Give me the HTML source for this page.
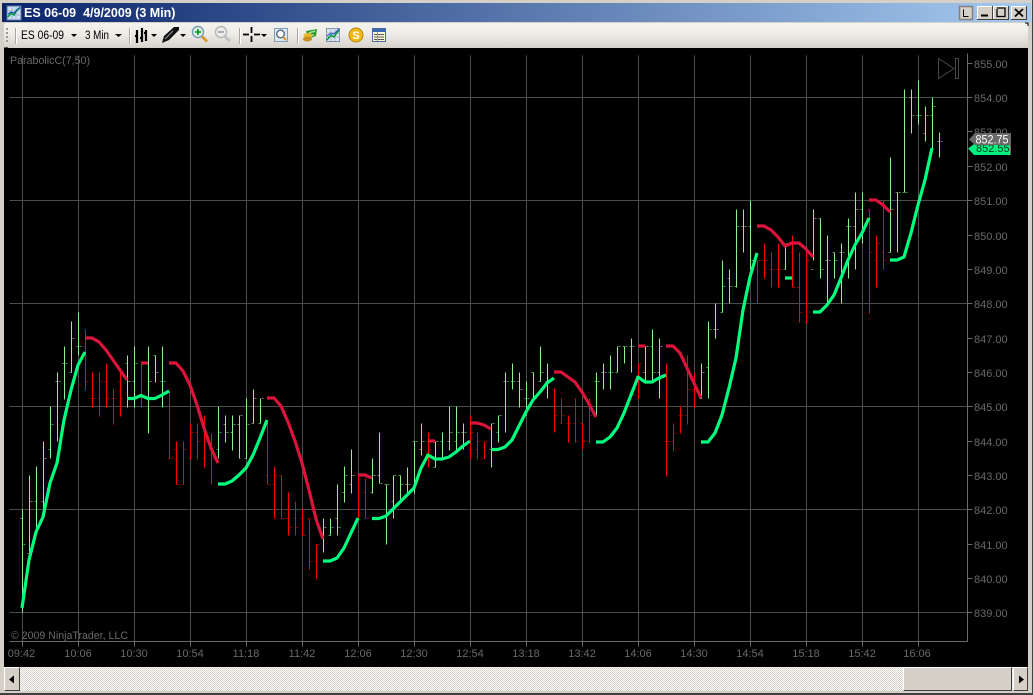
<!DOCTYPE html>
<html><head><meta charset="utf-8"><title>ES 06-09</title>
<style>
html,body{margin:0;padding:0;background:#d4d0c8;overflow:hidden}
body{width:1033px;height:695px;position:relative;font-family:"Liberation Sans",sans-serif}
svg{position:absolute;left:0;top:0}
text{font-family:"Liberation Sans",sans-serif}
#title{position:absolute;left:2px;top:3px;width:1029px;height:19px;background:linear-gradient(90deg,#0a246a 0,#a6caf0 100%)}
#tbar{position:absolute;left:4px;top:23px;width:1024px;height:24px;background:linear-gradient(180deg,#f4f3ee 0,#eeece6 45%,#d6d3cc 100%);border-radius:2px}
#chart{position:absolute;left:4px;top:48px;width:1024px;height:619px;background:#000}
#scroll{position:absolute;left:4px;top:667px;width:1024px;height:24px;background:repeating-conic-gradient(#d4d0c8 0 25%,#fff 0 50%) 0 0/2px 2px}
.b{position:absolute;box-sizing:border-box;background:#d4d0c8;border:1px solid;border-color:#fff #404040 #404040 #fff}
</style></head><body>
<div style="position:absolute;left:0;top:693px;width:1033px;height:2px;background:#404040"></div>
<div style="position:absolute;left:1032px;top:0;width:1px;height:695px;background:#404040"></div>
<div id="title"></div>
<div id="tbar"></div>
<div id="chart"></div>
<div id="scroll">
<div class="b" style="left:0;top:0;width:16px;height:24px"></div>
<div class="b" style="left:899px;top:0;width:109px;height:24px"></div>
<div class="b" style="left:1009px;top:0;width:15px;height:24px"></div>
</div>
<svg width="1033" height="695" viewBox="0 0 1033 695">
<!-- title bar -->
<text x="24" y="17" font-size="12.5" font-weight="bold" fill="#fff" xml:space="preserve">ES 06-09  4/9/2009 (3 Min)</text>
<rect x="7" y="6" width="14" height="14" fill="#cfe0f4" stroke="#54719c"/>
<path d="M7 11h14M7 15h14M12 6v14M16 6v14" stroke="#9db4d0" stroke-width="1"/>
<path d="M8 17l3-4 3 2 3-5 3-2" fill="none" stroke="#00a040" stroke-width="1.6"/>
<path d="M8 14l3-2 3 1 3-3 3-3" fill="none" stroke="#2040c0" stroke-width="1"/>
<rect x="959.500" y="6.500" width="13" height="13" fill="#d4d0c8" stroke="#808080" stroke-width="1.500"/>
<path d="M963.500 9.500v7h5" fill="none" stroke="#000" stroke-width="1"/>
<g fill="#d4d0c8" stroke="#404040"><rect x="977.500" y="6.500" width="15" height="13"/><rect x="993.500" y="6.500" width="15" height="13"/><rect x="1011.500" y="6.500" width="15" height="13"/></g>
<path d="M977.500 19V6.500H992M993.500 19V6.500H1008M1011.500 19V6.500H1026" fill="none" stroke="#fff"/>
<path d="M981 15.500h7" stroke="#000" stroke-width="2"/>
<path d="M997 8h8v1.500M997 9v7.500h8V9" fill="none" stroke="#000" stroke-width="1.300"/>
<path d="M1015 9l8 7.500M1023 9l-8 7.500" stroke="#000" stroke-width="1.800"/>
<!-- toolbar -->
<g fill="#9a9890"><rect x="6" y="28" width="2" height="2"/><rect x="6" y="32" width="2" height="2"/><rect x="6" y="36" width="2" height="2"/><rect x="6" y="40" width="2" height="2"/></g>
<path d="M15.500 28v16M129.500 28v16M239.500 28v16M297.500 28v16" stroke="#a8a69e"/>
<path d="M16.500 28v16M130.500 28v16M240.500 28v16M298.500 28v16" stroke="#fff"/>
<text x="21" y="39" font-size="11.500" fill="#000" textLength="43" lengthAdjust="spacingAndGlyphs">ES 06-09</text>
<text x="85" y="39" font-size="11.500" fill="#000" textLength="24" lengthAdjust="spacingAndGlyphs">3 Min</text>
<g fill="#000"><path d="M71 34h6l-3 3zM115 34h7l-3.500 3zM151 34h6l-3 3zM180 34h6l-3 3zM261 34h6l-3 3z"/></g>
<path d="M137 30v13M135 36h2M142 28v14M144 33h2M140 38h2M146 30v11" fill="none" stroke="#000" stroke-width="2.200"/>
<path d="M162 43l2-7 10-9 5 0 0 3-10 10z" fill="#111"/><path d="M165 39l8-8" stroke="#999"/>
<circle cx="198" cy="32" r="5.500" fill="#e2f0de" stroke="#7c9cbc" stroke-width="1.500"/>
<path d="M195 32h6M198 29v6" stroke="#10a030" stroke-width="1.800"/>
<path d="M202 36.500l5 5" stroke="#d89a30" stroke-width="3"/>
<circle cx="221" cy="32" r="5.500" fill="#ececec" stroke="#b8b8b8" stroke-width="1.500"/>
<path d="M218 32h6" stroke="#a8a8a8" stroke-width="1.800"/>
<path d="M225 36.500l5 5" stroke="#c0c0c0" stroke-width="3"/>
<path d="M243 34.500h6M254 34.500h6M251.500 27v6M251.500 36v6" stroke="#000" stroke-width="1.800"/>
<rect x="274.500" y="28.500" width="13" height="13" fill="#dfe9f6" stroke="#7f9db9"/>
<circle cx="280.500" cy="34" r="3.800" fill="#fff" stroke="#567" stroke-width="1.400"/><path d="M283 37l3 3" stroke="#d89a30" stroke-width="2.200"/>
<path d="M306 31l11-2-1 7-8 3z" fill="#2e9a2e"/><path d="M309 33l6-2M309 36l5-1" stroke="#9fe09f" stroke-width="1.500"/>
<ellipse cx="308" cy="35.500" rx="4.500" ry="2.500" fill="#e8b830"/><ellipse cx="307.500" cy="39" rx="4.500" ry="2.500" fill="#c89020"/>
<rect x="326.500" y="28.500" width="13" height="13" fill="#dbe6f4" stroke="#7f8fa9"/>
<path d="M326 33h14M326 37h14M331 28v13M335 28v13" stroke="#aab8cc"/>
<path d="M327 40l4-5 3 2 5-7" fill="none" stroke="#009a40" stroke-width="1.500"/><path d="M327 36l4-3 3 1 5-5" fill="none" stroke="#2050c0"/>
<circle cx="356" cy="35" r="7" fill="#f0b818" stroke="#b88410"/>
<text x="356" y="39" font-size="11" font-weight="bold" fill="#fff" text-anchor="middle">S</text>
<rect x="372.500" y="28.500" width="13" height="13" fill="#fbf7d8" stroke="#4a6c9c"/>
<rect x="373" y="29" width="12" height="3" fill="#3a68b0"/>
<path d="M374 34.500h10M374 37h10M374 39.500h10" stroke="#555" stroke-width="1"/>
<path d="M377.500 32v9" stroke="#999"/>
<path d="M4 48h3v-1M1025 23h3v3" stroke="#000" fill="none"/>
<!-- chart grid -->
<g shape-rendering="crispEdges" transform="translate(.5 .5)">
<path d="M9 97H967M9 200H967M9 303H967M9 406H967M9 509H967M9 612H967M22 55V641M78 55V641M134 55V641M190 55V641M246 55V641M302 55V641M358 55V641M414 55V641M470 55V641M526 55V641M582 55V641M638 55V641M694 55V641M750 55V641M806 55V641M862 55V641M918 55V641" stroke="#4c4c4c" fill="none"/>
<path d="M967 53V641H9M967 63h5M967 97h5M967 131h5M967 166h5M967 200h5M967 235h5M967 269h5M967 303h5M967 338h5M967 372h5M967 406h5M967 441h5M967 475h5M967 509h5M967 544h5M967 578h5M967 612h5M22 641v5M78 641v5M134 641v5M190 641v5M246 641v5M302 641v5M358 641v5M414 641v5M470 641v5M526 641v5M582 641v5M638 641v5M694 641v5M750 641v5M806 641v5M862 641v5M918 641v5" stroke="#6a6a6a" fill="none"/>
<!-- green bars -->
<path fill="none" stroke="#90ee90" d="M22 509V612M29 475V553M36 466V527M43 441V513M50 406V458M57 372V441M64 346V399M71 321V372M78 312V355M127 355V407M134 346V407M148 346V433M155 355V382M162 346V407M218 406V458M225 415V442M232 415V450M239 415V458M246 398V458M253 389V423M260 398V423M323 518V552M330 518V535M337 484V535M344 466V502M351 449V493M372 458V493M379 432V483M386 484V544M393 475V518M400 475V501M407 467V493M414 441V493M421 423V455M435 441V467M442 432V458M449 406V450M456 406V450M463 423V449M491 423V467M498 415V442M505 372V432M512 363V389M519 372V407M526 381V415M533 372V398M540 346V381M547 363V398M596 372V415M603 363V389M610 355V389M617 346V372M624 346V363M631 338V372M645 346V381M652 329V381M659 338V398M701 363V398M708 321V398M715 303V338M722 260V312M729 269V303M736 209V287M743 209V252M750 200V269M785 243V269M813 209V260M820 218V278M827 235V303M834 252V278M841 243V303M848 218V278M855 192V269M862 192V243M890 157V252M897 192V252M904 89V192M911 89V133M918 80V124M925 106V141M932 97V150M939 132V157"/>
<path fill="none" stroke="#90ee90" stroke-opacity=".6" d="M20 518h2M23 544h2M27 553h2M30 501h2M34 501h2M37 527h2M41 501h2M44 458h2M48 449h2M51 424h2M55 381h2M58 381h2M62 363h2M65 363h2M69 372h2M72 338h2M76 346h2M79 346h2M125 363h2M128 381h2M132 381h2M135 363h2M146 363h2M149 381h2M153 355h2M156 372h2M160 381h2M163 381h2M216 449h2M219 432h2M223 424h2M226 432h2M230 432h2M233 424h2M237 424h2M240 415h2M244 458h2M247 424h2M251 423h2M254 398h2M258 423h2M261 398h2M321 535h2M324 527h2M328 535h2M331 527h2M335 518h2M338 527h2M342 492h2M345 475h2M349 484h2M352 475h2M370 492h2M373 475h2M377 475h2M380 483h2M384 484h2M387 484h2M391 501h2M394 475h2M398 475h2M401 484h2M405 484h2M408 484h2M412 441h2M415 441h2M419 449h2M422 441h2M433 467h2M436 441h2M440 441h2M443 458h2M447 441h2M450 432h2M454 441h2M457 432h2M461 432h2M464 432h2M489 449h2M492 423h2M496 432h2M499 415h2M503 381h2M506 381h2M510 381h2M513 381h2M517 381h2M520 389h2M524 398h2M527 398h2M531 372h2M534 398h2M538 381h2M541 372h2M545 381h2M548 381h2M594 381h2M597 381h2M601 372h2M604 372h2M608 372h2M611 372h2M615 372h2M618 346h2M622 346h2M625 346h2M629 346h2M632 346h2M643 372h2M646 346h2M650 346h2M653 372h2M657 372h2M660 346h2M699 398h2M702 372h2M706 367h2M709 329h2M713 329h2M716 329h2M720 312h2M723 286h2M727 278h2M730 286h2M734 286h2M737 226h2M741 226h2M744 226h2M748 226h2M751 260h2M783 269h2M786 243h2M811 269h2M814 218h2M818 218h2M821 269h2M825 260h2M828 260h2M832 252h2M835 260h2M839 252h2M842 252h2M846 226h2M849 226h2M853 226h2M856 209h2M860 209h2M863 226h2M888 252h2M891 209h2M895 192h2M898 192h2M902 192h2M905 192h2M909 97h2M912 115h2M916 115h2M919 115h2M923 133h2M926 115h2M930 115h2M933 106h2M937 141h2M940 141h2"/>
<!-- red bars -->
<path fill="none" stroke="#f00" d="M85 329V390M92 372V407M99 372V416M106 363V407M113 389V424M120 372V416M141 363V407M169 390V458M176 441V484M183 441V484M190 423V458M197 423V458M204 415V467M211 433V484M267 420V484M274 466V518M281 475V518M288 492V535M295 501V535M302 509V535M309 518V569M316 544V578M358 475V518M365 478V518M428 432V467M470 415V458M477 432V458M484 441V458M554 389V432M561 398V423M568 415V442M575 398V442M582 423V449M589 398V442M638 363V398M666 363V476M673 423V450M680 406V433M687 355V424M694 372V407M757 260V303M764 243V278M771 252V287M778 243V287M792 235V287M799 252V322M806 252V322M869 209V313M876 235V287M883 200V269"/>
<path fill="none" stroke="#f00" stroke-opacity=".6" d="M83 346h2M86 381h2M90 398h2M93 398h2M97 398h2M100 381h2M104 381h2M107 398h2M111 398h2M114 398h2M118 381h2M121 398h2M167 458h2M170 458h2M174 449h2M177 484h2M181 484h2M184 449h2M188 458h2M191 432h2M195 432h2M198 441h2M202 458h2M205 441h2M209 449h2M212 458h2M265 475h2M268 484h2M272 484h2M275 475h2M279 475h2M282 518h2M286 518h2M289 527h2M293 518h2M296 527h2M300 518h2M303 535h2M307 518h2M310 561h2M314 561h2M317 544h2M356 518h2M359 475h2M363 492h2M366 518h2M426 441h2M429 449h2M468 449h2M471 432h2M475 449h2M478 441h2M482 458h2M485 441h2M552 389h2M555 415h2M559 423h2M562 415h2M566 423h2M569 423h2M573 423h2M576 441h2M580 423h2M583 441h2M587 441h2M590 415h2M636 398h2M639 363h2M664 441h2M667 441h2M671 441h2M674 433h2M678 415h2M681 415h2M685 415h2M688 389h2M692 389h2M695 389h2M755 269h2M758 260h2M762 260h2M765 260h2M769 269h2M772 269h2M776 269h2M779 269h2M790 252h2M793 287h2M797 287h2M800 312h2M804 322h2M807 260h2M867 209h2M870 252h2M874 260h2M877 243h2M881 252h2M884 260h2"/>
</g>
<!-- parabolic lines -->
<g fill="none" stroke-width="3.200" stroke-linejoin="round" stroke="#dc143c">
<path d="M85 338H92L99 342 106 350 113 360 120 370 127 380"/>
<path d="M141 363H148"/>
<path d="M169 363H176L183 371 190 385 197 405 204 428 211 448 218 463"/>
<path d="M267 398H274L281 406 288 422 295 441 302 463 309 490 316 519 323 539"/>
<path d="M358 475H365L372 478"/>
<path d="M428 441H435"/>
<path d="M470 423H477L484 425 491 429"/>
<path d="M554 372H561L568 377 575 382 582 392 589 404 596 417"/>
<path d="M638 346H645"/>
<path d="M666 346H673L680 353 687 368 694 383 701 398"/>
<path d="M757 226H764L771 230 778 237 785 246 792 243H799L806 249 813 257"/>
<path d="M869 200H876L883 205 890 212"/>
</g>
<g fill="none" stroke-width="3.200" stroke-linejoin="round" stroke="#00ff7f">
<path d="M22 608 29 560 36 532 43 517 50 483 57 463 64 420 71 390 78 365 85 352"/>
<path d="M127 398.500H134L141 395.500 148 398.500H155L162 395 169 391"/>
<path d="M218 484H225L232 481 239 475 246 468 253 455 260 438 267 420"/>
<path d="M323 561H330L337 558 344 548 351 533 358 518"/>
<path d="M372 518.500H379L386 516 393 509 400 502 407 495 414 488 421 468 428 455 435 459H442L449 457 456 452 463 446 470 441"/>
<path d="M491 449.500H498L505 447 512 440 519 426 526 412 533 400 540 392 547 383 554 378"/>
<path d="M596 442H603L610 437 617 428 624 413 631 395 638 377 645 382H652L659 378 666 375"/>
<path d="M701 442H708L715 433 722 415 729 388 736 358 743 310 750 277 757 253"/>
<path d="M785 278H792"/>
<path d="M813 312H820L827 305 834 295 841 278 848 260 855 245 862 233 869 218"/>
<path d="M890 260H897L904 257 911 233 918 205 925 180 932 148"/>
</g>
<!-- skip icon -->
<path d="M938.500 58.500V78.500L954 68.500ZM955.500 58.500H958.500V78.500H955.500Z" fill="none" stroke="#484848"/>
<!-- labels -->
<g font-size="11" fill="#696969">
<text x="10" y="64" textLength="80" lengthAdjust="spacingAndGlyphs">ParabolicC(7,50)</text>
<text x="11" y="639" textLength="117" lengthAdjust="spacingAndGlyphs">© 2009 NinjaTrader, LLC</text>
<g text-anchor="middle">
<text x="21.500" y="657">09:42</text><text x="78" y="657">10:06</text><text x="134" y="657">10:30</text><text x="190" y="657">10:54</text><text x="246" y="657">11:18</text><text x="302" y="657">11:42</text><text x="358" y="657">12:06</text><text x="414" y="657">12:30</text><text x="470" y="657">12:54</text><text x="526" y="657">13:18</text><text x="582" y="657">13:42</text><text x="638" y="657">14:06</text><text x="694" y="657">14:30</text><text x="750" y="657">14:54</text><text x="806" y="657">15:18</text><text x="862" y="657">15:42</text><text x="917" y="657">16:06</text>
</g>
<text x="974" y="68">855.00</text><text x="974" y="102">854.00</text><text x="974" y="136">853.00</text><text x="974" y="171">852.00</text><text x="974" y="205">851.00</text><text x="974" y="240">850.00</text><text x="974" y="274">849.00</text><text x="974" y="308">848.00</text><text x="974" y="343">847.00</text><text x="974" y="377">846.00</text><text x="974" y="411">845.00</text><text x="974" y="446">844.00</text><text x="974" y="480">843.00</text><text x="974" y="514">842.00</text><text x="974" y="549">841.00</text><text x="974" y="583">840.00</text><text x="974" y="617">839.00</text>
</g>
<!-- price tags -->
<path d="M968 148.500 974 144H1010V155H974Z" fill="#00f080"/>
<text x="976" y="152" font-size="11" fill="#004020">852.55</text>
<rect x="1010" y="144" width="1" height="11" fill="#696969"/>
<path d="M969 139.500 975 133H1011V145H975Z" fill="#696969"/>
<text x="975.500" y="143.500" font-size="11.500" fill="#fff" textLength="33" lengthAdjust="spacingAndGlyphs">852.75</text>
<!-- scroll arrows -->
<path d="M14 675.500V683.500L9 679.500Z" fill="#000"/>
<path d="M1019 675.500V683.500L1024 679.500Z" fill="#000"/>
</svg>
</body></html>
